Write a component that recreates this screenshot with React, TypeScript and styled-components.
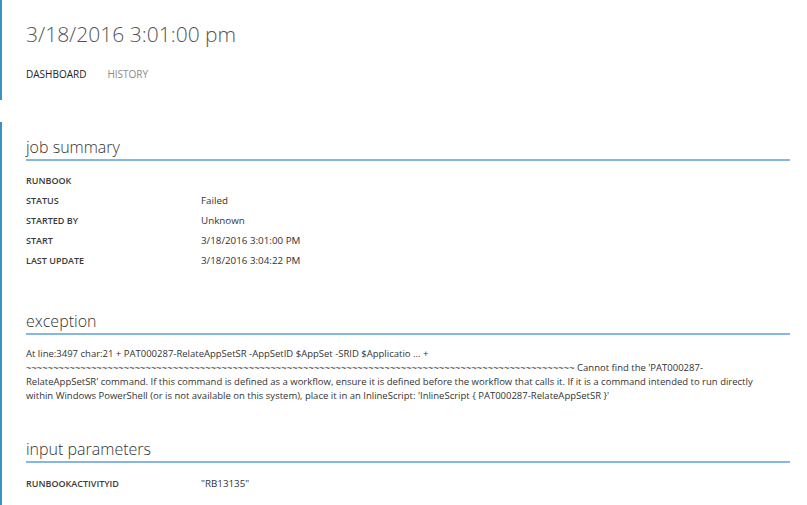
import React from "react";
import styled, { createGlobalStyle } from "styled-components";

const GlobalStyle = createGlobalStyle`
  html, body { margin: 0; padding: 0; background: #ffffff; }
  body { font-family: "Open Sans", "Noto Sans", sans-serif; color: #333333; overflow: hidden; }
`;

const Page = styled.div`
  width: 807px;
  height: 505px;
  display: flex;
  flex-direction: column;
  gap: 22px;
`;

const Block = styled.div<{ $grow?: boolean }>`
  border-left: 2px solid #3d92c3;
  padding-left: 24px;
  padding-right: 17px;
  ${(p) => (p.$grow ? "flex: 1;" : "height: 100px; box-sizing: border-box;")}
`;

const Header = styled(Block)`
  padding-top: 18px;
`;

const Title = styled.h1`
  margin: 0;
  font-size: 21px;
  line-height: 32px;
  font-weight: 300;
  color: #555555;
`;

const Tabs = styled.nav`
  margin-top: 17px;
  display: flex;
  gap: 21px;
`;

const Tab = styled.span<{ $active?: boolean }>`
  font-size: 10px;
  line-height: 14px;
  color: ${(p) => (p.$active ? "#222222" : "#8a8a8a")};
`;

const Content = styled(Block)`
  padding-top: 14px;
  display: flex;
  flex-direction: column;
`;

const Section = styled.section<{ $gap: number }>`
  margin-bottom: ${(p) => p.$gap}px;
`;

const Heading = styled.h2`
  margin: 0;
  font-size: 16px;
  line-height: 22px;
  font-weight: 300;
  color: #333333;
  padding-bottom: 1px;
  border-bottom: 2px solid #86b6e4;
`;

const Rows = styled.div<{ $top: number }>`
  margin-top: ${(p) => p.$top}px;
  display: flex;
  flex-direction: column;
`;

const Row = styled.div`
  display: grid;
  grid-template-columns: 175px 1fr;
  height: 20px;
  align-items: center;
`;

const Label = styled.span`
  font-size: 9px;
  font-weight: 600;
  color: #3a3a3a;
  text-transform: uppercase;
`;

const Value = styled.span`
  font-size: 9.8px;
  color: #333333;
`;

const Message = styled.div`
  margin-top: 12px;
  font-size: 9.5px;
  line-height: 14px;
  color: #333333;
`;

const MessageLine = styled.span`
  display: block;
  white-space: nowrap;
`;

const tildes = "~".repeat(101);

export default function App() {
  return (
    <>
      <GlobalStyle />
      <Page>
        <Header>
          <Title>3/18/2016 3:01:00 pm</Title>
          <Tabs>
            <Tab $active>DASHBOARD</Tab>
            <Tab>HISTORY</Tab>
          </Tabs>
        </Header>
        <Content $grow>
          <Section $gap={40}>
            <Heading>job summary</Heading>
            <Rows $top={9}>
              <Row>
                <Label>Runbook</Label>
                <Value></Value>
              </Row>
              <Row>
                <Label>Status</Label>
                <Value>Failed</Value>
              </Row>
              <Row>
                <Label>Started by</Label>
                <Value>Unknown</Value>
              </Row>
              <Row>
                <Label>Start</Label>
                <Value>3/18/2016 3:01:00 PM</Value>
              </Row>
              <Row>
                <Label>Last update</Label>
                <Value>3/18/2016 3:04:22 PM</Value>
              </Row>
            </Rows>
          </Section>
          <Section $gap={35}>
            <Heading>exception</Heading>
            <Message>
              <MessageLine>
                At line:3497 char:21 + PAT000287-RelateAppSetSR -AppSetID $AppSet -SRID $Applicatio ... +
              </MessageLine>
              <MessageLine>{tildes} Cannot find the 'PAT000287-</MessageLine>
              <MessageLine>
                RelateAppSetSR' command. If this command is defined as a workflow, ensure it is defined before the workflow that calls it. If it is a command intended to run directly
              </MessageLine>
              <MessageLine>
                within Windows PowerShell (or is not available on this system), place it in an InlineScript: 'InlineScript {"{"} PAT000287-RelateAppSetSR {"}"}'
              </MessageLine>
            </Message>
          </Section>
          <Section $gap={0}>
            <Heading>input parameters</Heading>
            <Rows $top={10}>
              <Row>
                <Label>RunbookActivityID</Label>
                <Value>"RB13135"</Value>
              </Row>
            </Rows>
          </Section>
        </Content>
      </Page>
    </>
  );
}
